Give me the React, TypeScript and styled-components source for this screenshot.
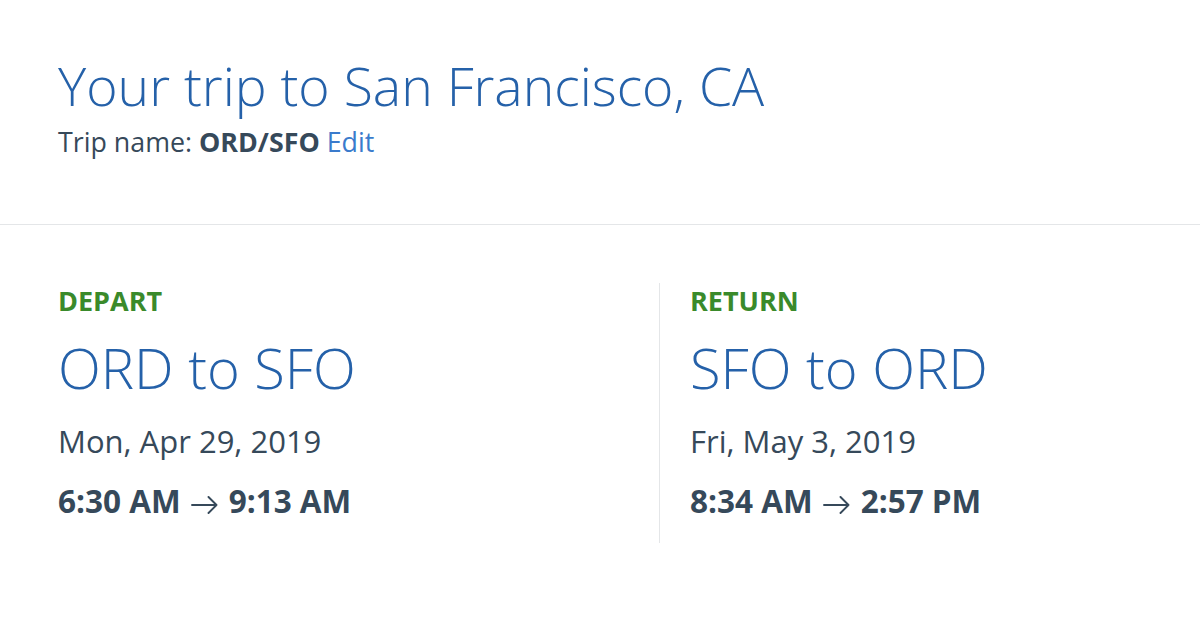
import React from "react";
import styled, { createGlobalStyle } from "styled-components";

const Global = createGlobalStyle`
  html, body { margin: 0; padding: 0; background: #ffffff; }
  body { font-family: "Open Sans", "Noto Sans", sans-serif; }
`;

const Page = styled.div`
  width: 1200px;
  height: 626px;
  background: #fff;
  overflow: hidden;
`;

const Header = styled.header`
  box-sizing: border-box;
  height: 225px;
  padding: 54px 58px 0;
  border-bottom: 1px solid #e4e6e8;
`;

const Title = styled.h1`
  margin: 0;
  font-weight: 300;
  font-size: 53.5px;
  line-height: 64px;
  color: #2561a9;
`;

const TripName = styled.div`
  font-size: 26.8px;
  line-height: 36px;
  color: #36495a;
  margin-top: 6px;
  b { font-weight: 700; }
`;

const EditLink = styled.a`
  color: #3a7bcc;
  text-decoration: none;
`;

const Legs = styled.div`
  display: grid;
  grid-template-columns: 601px 1fr;
  padding: 58px 0 0 58px;
`;

const Leg = styled.section<{ $divided?: boolean }>`
  padding-left: ${(p) => (p.$divided ? "30px" : "0")};
  border-left: ${(p) => (p.$divided ? "1px solid #e4e6e8" : "none")};
  height: 260px;
`;

const Label = styled.div`
  color: #3a8a2b;
  font-weight: 700;
  font-size: 27px;
  line-height: 36px;
`;

const Route = styled.div`
  color: #2561a9;
  font-weight: 300;
  font-size: 56px;
  line-height: 72px;
  margin-top: 12px;
`;

const DateText = styled.div`
  color: #36495a;
  font-size: 31px;
  line-height: 40px;
  margin-top: 18px;
`;

const Times = styled.div`
  color: #36495a;
  font-size: 31.5px;
  font-weight: 700;
  line-height: 40px;
  margin-top: 20px;
  white-space: nowrap;
`;

const ArrowSvg = styled.svg`
  display: inline-block;
  width: 27px;
  height: 18px;
  margin: 0 11px 0 10px;
  vertical-align: -1px;
`;

function Arrow() {
  return (
    <ArrowSvg viewBox="0 0 27 18" aria-label="to">
      <path
        d="M1 9 H25.5 M17.5 1 L25.5 9 L17.5 17"
        fill="none"
        stroke="#36495a"
        strokeWidth="1.9"
        strokeLinecap="round"
        strokeLinejoin="round"
      />
    </ArrowSvg>
  );
}

export default function App() {
  return (
    <Page>
      <Global />
      <Header>
        <Title>Your trip to San Francisco, CA</Title>
        <TripName>
          Trip name: <b>ORD/SFO</b> <EditLink href="#">Edit</EditLink>
        </TripName>
      </Header>
      <Legs>
        <Leg>
          <Label>DEPART</Label>
          <Route>ORD to SFO</Route>
          <DateText>Mon, Apr 29, 2019</DateText>
          <Times>
            6:30 AM<Arrow />9:13 AM
          </Times>
        </Leg>
        <Leg $divided>
          <Label>RETURN</Label>
          <Route>SFO to ORD</Route>
          <DateText>Fri, May 3, 2019</DateText>
          <Times>
            8:34 AM<Arrow />2:57 PM
          </Times>
        </Leg>
      </Legs>
    </Page>
  );
}
